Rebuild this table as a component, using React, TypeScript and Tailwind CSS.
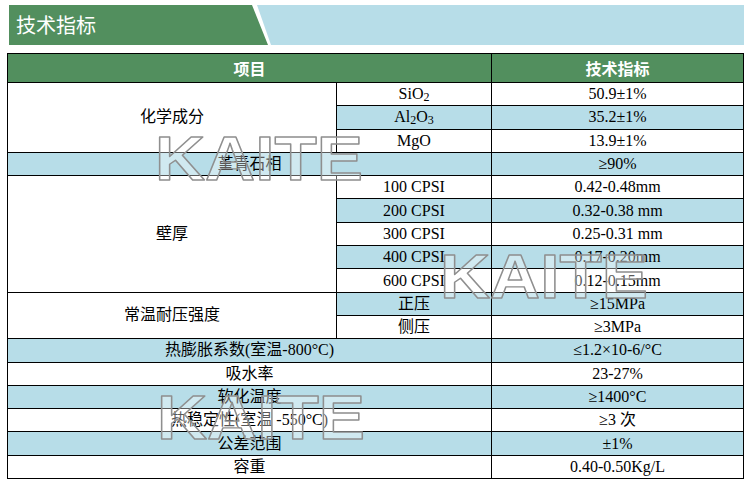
import React from "react";

function C({ children, className = "" }: { children?: React.ReactNode; className?: string }) {
  return <div className={"flex items-center justify-center leading-none whitespace-nowrap " + className}>{children}</div>;
}

function Mark({ className }: { className: string }) {
  return (
    <svg className={"absolute pointer-events-none " + className} width="220" height="54" viewBox="0 0 220 54">
      <text
        x="2"
        y="47"
        fontSize="63"
        fontWeight="700"
        fontFamily="Liberation Sans, Arial, sans-serif"
        textLength="208"
        lengthAdjust="spacingAndGlyphs"
        fill="rgba(255,255,255,0.35)"
        stroke="#8f8f8f"
        strokeWidth="1.4"
        strokeLinejoin="round"
      >
        KAITE
      </text>
    </svg>
  );
}

export default function App() {
  return (
    <div className="relative w-[750px] h-[494px] bg-white overflow-hidden text-black font-['Liberation_Serif','Noto_Sans_CJK_SC',serif]">
      <div className="flex h-[40px] mt-[5px] ml-[9px] w-[735px]">
        <div className="w-[259px] shrink-0 bg-[#528F5E] [clip-path:polygon(0_0,243px_0,259px_100%,0_100%)] flex items-center pl-[7px] text-white text-[20px] font-['Noto_Sans_CJK_SC',sans-serif]">
          技术指标
        </div>
        <div className="flex-1 -ml-[11px] bg-[#B7DDE8] [clip-path:polygon(0_0,100%_0,100%_100%,14px_100%)]" />
      </div>

      <div className="mt-[8px] ml-[7px] w-[737px] grid grid-cols-[328px_154px_251px] grid-rows-[28px_repeat(17,22.3px)] gap-px bg-black p-px text-[16px]">
        <C className="col-span-2 bg-[#528F5E] text-white font-bold font-['Noto_Sans_CJK_SC',sans-serif]">项目</C>
        <C className="bg-[#528F5E] text-white font-bold font-['Noto_Sans_CJK_SC',sans-serif]">技术指标</C>

        <C className="row-span-3 bg-white">化学成分</C>
        <C className="bg-white">SiO<sub>2</sub></C>
        <C className="bg-white">50.9±1%</C>
        <C className="bg-[#B7DDE8]">Al<sub>2</sub>O<sub>3</sub></C>
        <C className="bg-[#B7DDE8]">35.2±1%</C>
        <C className="bg-white">MgO</C>
        <C className="bg-white">13.9±1%</C>

        <C className="col-span-2 bg-[#B7DDE8]">堇青石相</C>
        <C className="bg-[#B7DDE8]">≥90%</C>

        <C className="row-span-5 bg-white">壁厚</C>
        <C className="bg-white">100 CPSI</C>
        <C className="bg-white">0.42-0.48mm</C>
        <C className="bg-[#B7DDE8]">200 CPSI</C>
        <C className="bg-[#B7DDE8]">0.32-0.38 mm</C>
        <C className="bg-white">300 CPSI</C>
        <C className="bg-white">0.25-0.31 mm</C>
        <C className="bg-[#B7DDE8]">400 CPSI</C>
        <C className="bg-[#B7DDE8]">0.17-0.20mm</C>
        <C className="bg-white">600 CPSI</C>
        <C className="bg-white">0.12-0.15mm</C>

        <C className="row-span-2 bg-white">常温耐压强度</C>
        <C className="bg-[#B7DDE8]">正压</C>
        <C className="bg-[#B7DDE8]">≥15MPa</C>
        <C className="bg-white">侧压</C>
        <C className="bg-white">≥3MPa</C>

        <C className="col-span-2 bg-[#B7DDE8]">热膨胀系数(室温-800°C)</C>
        <C className="bg-[#B7DDE8]">≤1.2×10-6/°C</C>
        <C className="col-span-2 bg-white">吸水率</C>
        <C className="bg-white">23-27%</C>
        <C className="col-span-2 bg-[#B7DDE8]">软化温度</C>
        <C className="bg-[#B7DDE8]">≥1400°C</C>
        <C className="col-span-2 bg-white">热稳定性(室温 -550°C)</C>
        <C className="bg-white">≥3 次</C>
        <C className="col-span-2 bg-[#B7DDE8]">公差范围</C>
        <C className="bg-[#B7DDE8]">±1%</C>
        <C className="col-span-2 bg-white">容重</C>
        <C className="bg-white">0.40-0.50Kg/L</C>
      </div>

      <Mark className="left-[153px] top-[133px]" />
      <Mark className="left-[438px] top-[251px]" />
      <Mark className="left-[155px] top-[392px]" />
    </div>
  );
}
